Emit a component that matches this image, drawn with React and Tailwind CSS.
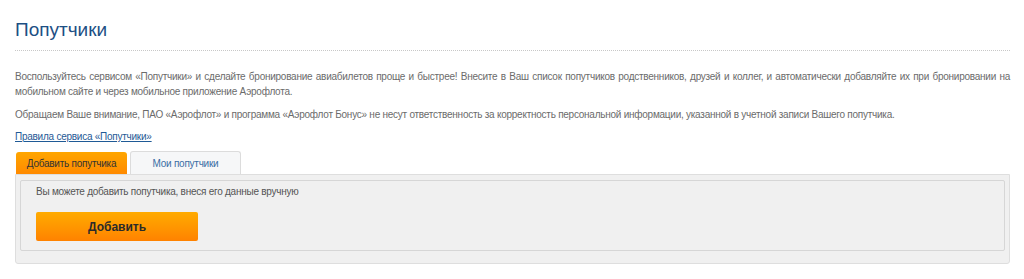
export default function App() {
  return (
    <div className="w-[1024px] h-[279px] bg-white pl-[15px] pr-[14px] pt-[18px]" style={{ fontFamily: '"Liberation Sans", Tahoma, Arial, sans-serif' }}>
      <h1 className="text-[19px] leading-[23px] text-[#1d4f84] font-normal pb-[9px] border-b border-dotted border-[#c8c8c8]">
        Попутчики
      </h1>
      <div className="text-[10px] leading-[15px] tracking-[-0.25px] text-[#6b6b6b]">
        <p className="mt-[18px] text-justify">
          Воспользуйтесь сервисом «Попутчики» и сделайте бронирование авиабилетов проще и быстрее! Внесите в Ваш список попутчиков родственников, друзей и коллег, и автоматически добавляйте их при бронировании на мобильном сайте и через мобильное приложение Аэрофлота.
        </p>
        <p className="mt-[8px]">
          Обращаем Ваше внимание, ПАО «Аэрофлот» и программа «Аэрофлот Бонус» не несут ответственность за корректность персональной информации, указанной в учетной записи Вашего попутчика.
        </p>
        <p className="mt-[7px]">
          <a href="#" className="text-[#1f5a96] underline">Правила сервиса «Попутчики»</a>
        </p>
      </div>
      <div className="mt-[7px]">
        <div className="flex items-end gap-[3px] pl-[1px]">
          <div className="w-[111px] h-[22px] flex items-center justify-center rounded-t-[3px] bg-gradient-to-b from-[#ffa600] to-[#ff8a00] text-[10px] tracking-[-0.25px] text-[#333]">
            Добавить попутчика
          </div>
          <div className="w-[111px] h-[23px] flex items-center justify-center rounded-t-[3px] bg-[#f6f7f8] border border-b-0 border-[#dcdcdc] text-[10px] tracking-[-0.25px] text-[#3a6ea5]">
            Мои попутчики
          </div>
        </div>
        <div className="bg-[#f0f0f0] border border-[#dedede] rounded-b-[3px] px-[4px] pt-[5px] pb-[12px]">
          <div className="border border-[#d6d6d6] rounded-[2px] px-[15px] pt-[4px] pb-[9px]">
            <p className="text-[10px] leading-[14px] tracking-[-0.25px] text-[#555]">
              Вы можете добавить попутчика, внеся его данные вручную
            </p>
            <button className="mt-[13px] w-[162px] h-[29px] rounded-[2px] bg-gradient-to-b from-[#ffab00] to-[#ff8200] text-[12px] font-bold text-[#2a2a2a]">
              Добавить
            </button>
          </div>
        </div>
      </div>
    </div>
  )
}
